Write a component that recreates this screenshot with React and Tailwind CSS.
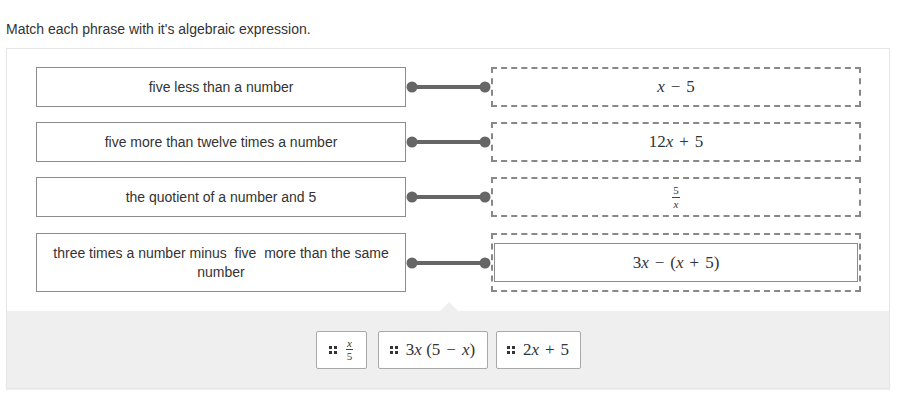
import React from 'react';

const mathFont = { fontFamily: '"Liberation Serif", "DejaVu Serif", serif' };

const X = () => <i className="italic">x</i>;
const Op = ({ c }) => <span className="mx-[6px]">{c}</span>;

const Frac = ({ top, bottom, size = 'text-[11px]' }) => (
    <span className={`inline-flex flex-col items-center leading-[1.1] ${size}`} style={mathFont}>
        <span className="px-[1px]">{top}</span>
        <span className="px-[1px] border-t border-[#444] w-full text-center">{bottom}</span>
    </span>
);

const rows = [
    { phrase: 'five less than a number', expr: <><X /><Op c="−" />5</>, h: 'h-[40px]' },
    { phrase: 'five more than twelve times a number', expr: <>12<X /><Op c="+" />5</>, h: 'h-[40px]' },
    { phrase: 'the quotient of a number and 5', expr: <Frac top="5" bottom={<X />} />, h: 'h-[40px]' },
    { phrase: <>three times a number minus &nbsp;five &nbsp;more than the same number</>, expr: <>3<X /><Op c="−" />(<X /><Op c="+" />5)</>, h: 'h-[59px]', nested: true },
];

const Handle = () => (
    <span className="grid grid-cols-2 gap-[2px] w-[8px] h-[8px] shrink-0">
        <span className="bg-[#333] w-[3px] h-[3px]"></span>
        <span className="bg-[#333] w-[3px] h-[3px]"></span>
        <span className="bg-[#333] w-[3px] h-[3px]"></span>
        <span className="bg-[#333] w-[3px] h-[3px]"></span>
    </span>
);

const Connector = () => (
    <div className="flex items-center">
        <svg width="85" height="12" viewBox="0 0 85 12">
            <line x1="6" y1="6" x2="79" y2="6" stroke="#666" strokeWidth="4" />
            <circle cx="6" cy="6" r="5.5" fill="#666" />
            <circle cx="79" cy="6" r="5.5" fill="#666" />
        </svg>
    </div>
);

export default function App() {
    return (
        <div className="w-[898px] h-[404px] bg-white text-[#333]" style={{ fontFamily: '"Liberation Sans", Arial, sans-serif' }}>
            <div className="pt-[19px] pl-[6px] text-[14px] leading-[20px] h-[48px]">Match each phrase with it's algebraic expression.</div>
            <div className="ml-[6px] w-[884px] border border-[#e6e6e6] shadow-[0_1px_1px_rgba(0,0,0,0.06)]">
                <div className="pt-[18px] pb-[19px] pl-[29px] pr-[28px] flex flex-col gap-[15px]">
                    {rows.map((r, i) => (
                        <div key={i} className={`grid grid-cols-[370px_85px_370px] ${r.h} ${i === 3 ? 'mt-[1px]' : ''}`}>
                            <div className="border border-[#8c8c8c] flex items-center justify-center text-center text-[14px] leading-[19px] px-4">
                                {r.phrase}
                            </div>
                            <Connector />
                            <div className="border-2 border-dashed border-[#888] flex items-center justify-center text-[17px]" style={mathFont}>
                                {r.nested ? (
                                    <div className="w-full mx-[1px] h-[39px] border border-[#8c8c8c] flex items-center justify-center">{r.expr}</div>
                                ) : r.expr}
                            </div>
                        </div>
                    ))}
                </div>
                <div className="relative bg-[#efefef] h-[77px] flex items-center justify-center">
                    <span className="absolute left-[433px] -top-[9px] w-0 h-0 border-l-[9px] border-r-[9px] border-b-[9px] border-l-transparent border-r-transparent border-b-[#efefef]"></span>
                    <div className="h-[38px] w-[51px] bg-white border border-[#a8a8a8] rounded-[2px] flex items-center justify-center gap-[9px]">
                        <Handle />
                        <Frac top={<X />} bottom="5" />
                    </div>
                    <div className="ml-[11px] h-[38px] w-[110px] bg-white border border-[#a8a8a8] rounded-[2px] flex items-center justify-center gap-[8px] text-[17px]" style={mathFont}>
                        <Handle />
                        <span>3<X /> (5<Op c="−" /><X />)</span>
                    </div>
                    <div className="ml-[8px] h-[38px] w-[85px] bg-white border border-[#a8a8a8] rounded-[2px] flex items-center justify-center gap-[8px] text-[17px]" style={mathFont}>
                        <Handle />
                        <span>2<X /><Op c="+" />5</span>
                    </div>
                </div>
            </div>
        </div>
    );
}
